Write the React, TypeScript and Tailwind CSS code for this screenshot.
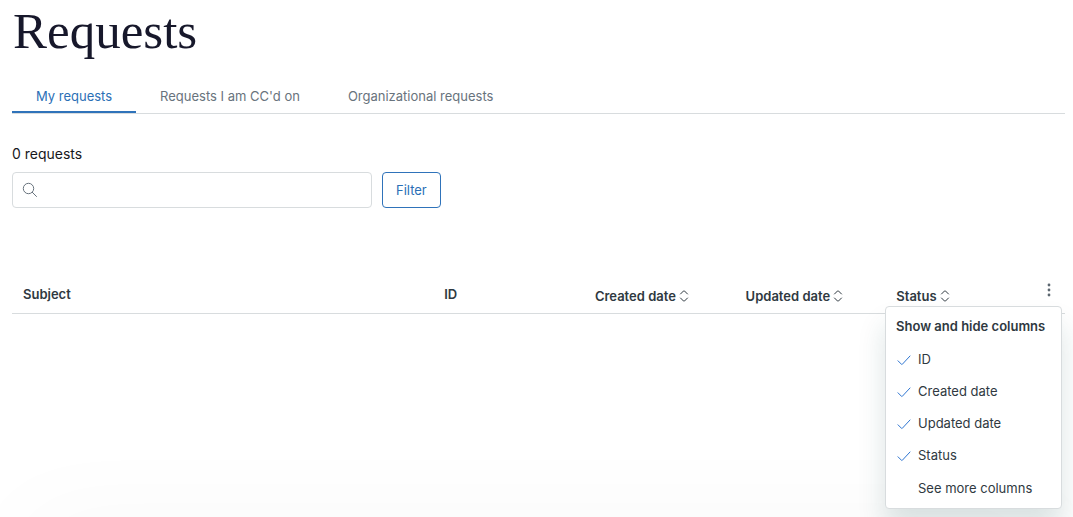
import { useState } from "react";

const tabs = ["My requests", "Requests I am CC'd on", "Organizational requests"];
const sortable = ["Created date", "Updated date", "Status"];
const columns = ["ID", "Created date", "Updated date", "Status"];

function SearchIcon() {
  return (
    <svg viewBox="0 0 16 16" className="size-4 shrink-0 text-[#68737d]" fill="none" stroke="currentColor" aria-hidden="true">
      <circle cx="6.5" cy="6.5" r="5.2" />
      <path strokeLinecap="round" d="M10.3 10.3l4.2 4.2" />
    </svg>
  );
}

function SortIcon() {
  return (
    <svg viewBox="0 0 12 12" className="size-3 shrink-0 text-[#2f3941]" fill="none" stroke="currentColor" strokeLinecap="round" aria-hidden="true">
      <path d="M2.5 4L5.6.9q.4-.4.8 0L9.5 4M2.5 8l3.1 3.1q.4.4.8 0L9.5 8" />
    </svg>
  );
}

function CheckIcon() {
  return (
    <svg viewBox="0 0 16 16" className="size-4 shrink-0" fill="none" stroke="#2f76d2" strokeLinecap="round" strokeLinejoin="round" aria-hidden="true">
      <path d="M2 9.8l3.6 3.6q.3.3.6 0L14 5" />
    </svg>
  );
}

export default function App() {
  const [tab, setTab] = useState(0);
  const [open, setOpen] = useState(true);
  const [hidden, setHidden] = useState<string[]>([]);
  const toggle = (name: string) =>
    setHidden((h) => (h.includes(name) ? h.filter((n) => n !== name) : [...h, name]));

  return (
    <div className="relative min-h-screen overflow-hidden bg-white pr-2 pl-3 font-[Inter,'Liberation_Sans',sans-serif] text-[13px] leading-5 text-[#2f3941]">
      <h1 className="pt-[3px] pl-px font-['Liberation_Serif',serif] text-[51px] leading-[56px] text-[#17182b]">Requests</h1>

      <div role="tablist" className="mt-[21px] flex border-b border-[#d8dcde]">
        {tabs.map((name, i) => (
          <button
            key={name}
            type="button"
            role="tab"
            aria-selected={tab === i}
            onClick={() => setTab(i)}
            className={
              "h-[33px] border-b-2 px-6 " +
              (tab === i ? "border-[#2f73ba] text-[#2b6fb6]" : "border-transparent text-[#68737d]")
            }
          >
            {name}
          </button>
        ))}
      </div>

      <p className="mt-[30px] text-sm text-[#17181c]">0 requests</p>

      <div className="mt-2 flex gap-[10px]">
        <label className="flex h-9 w-[360px] items-center gap-2 rounded border border-[#d8dcde] px-[9px]">
          <SearchIcon />
          <input type="search" aria-label="Search requests" className="min-w-0 flex-1 bg-transparent outline-none" />
        </label>
        <button type="button" className="h-9 rounded border border-[#2f73ba] px-[13px] text-[#2b6fb6]">
          Filter
        </button>
      </div>

      <div className="relative mt-[68px]">
        <table className="w-full table-fixed border-b border-[#d8dcde] text-left">
          <thead>
            <tr className="h-[37px]">
              <th className="w-2/5 px-[11px] font-semibold">Subject</th>
              {!hidden.includes("ID") && <th className="px-[11px] font-semibold">ID</th>}
              {sortable
                .filter((name) => !hidden.includes(name))
                .map((name) => (
                  <th key={name} className="px-[11px] pt-1 font-semibold">
                    <button type="button" className="flex items-center gap-[2px] whitespace-nowrap">
                      {name}
                      <SortIcon />
                    </button>
                  </th>
                ))}
              <th className="w-[29px] pb-2 font-semibold">
                <button
                  type="button"
                  aria-label="Show and hide columns"
                  aria-expanded={open}
                  onClick={() => setOpen(!open)}
                  className="flex h-5 w-[26px] items-center justify-center"
                >
                  <svg viewBox="0 0 16 16" className="size-4 text-[#5c6770]" fill="currentColor" aria-hidden="true">
                    <circle cx="8" cy="3" r="1.4" />
                    <circle cx="8" cy="8" r="1.4" />
                    <circle cx="8" cy="13" r="1.4" />
                  </svg>
                </button>
              </th>
            </tr>
          </thead>
        </table>

        {open && (
          <div
            role="menu"
            className="absolute top-[30px] right-[3px] z-10 w-[177px] rounded border border-[#d8dcde] bg-white py-1 text-[#2f3941] shadow-[0_20px_28px_0_rgba(23,73,77,0.15)]"
          >
            <p className="px-[10px] py-[5px] font-semibold whitespace-nowrap">Show and hide columns</p>
            <div className="mt-[2px]">
              {columns.map((name) => (
                <button
                  key={name}
                  type="button"
                  role="menuitemcheckbox"
                  aria-checked={!hidden.includes(name)}
                  onClick={() => toggle(name)}
                  className="flex h-8 w-full items-center gap-[6px] pl-[10px]"
                >
                  {hidden.includes(name) ? <span className="size-4" /> : <CheckIcon />}
                  {name}
                </button>
              ))}
              <button type="button" role="menuitem" className="flex h-[33px] w-full items-center pl-8">
                See more columns
              </button>
            </div>
          </div>
        )}
      </div>

      <div className="absolute inset-x-6 top-full h-20 shadow-[0_0_100px_0_rgba(0,0,0,0.03)]" />
    </div>
  );
}
